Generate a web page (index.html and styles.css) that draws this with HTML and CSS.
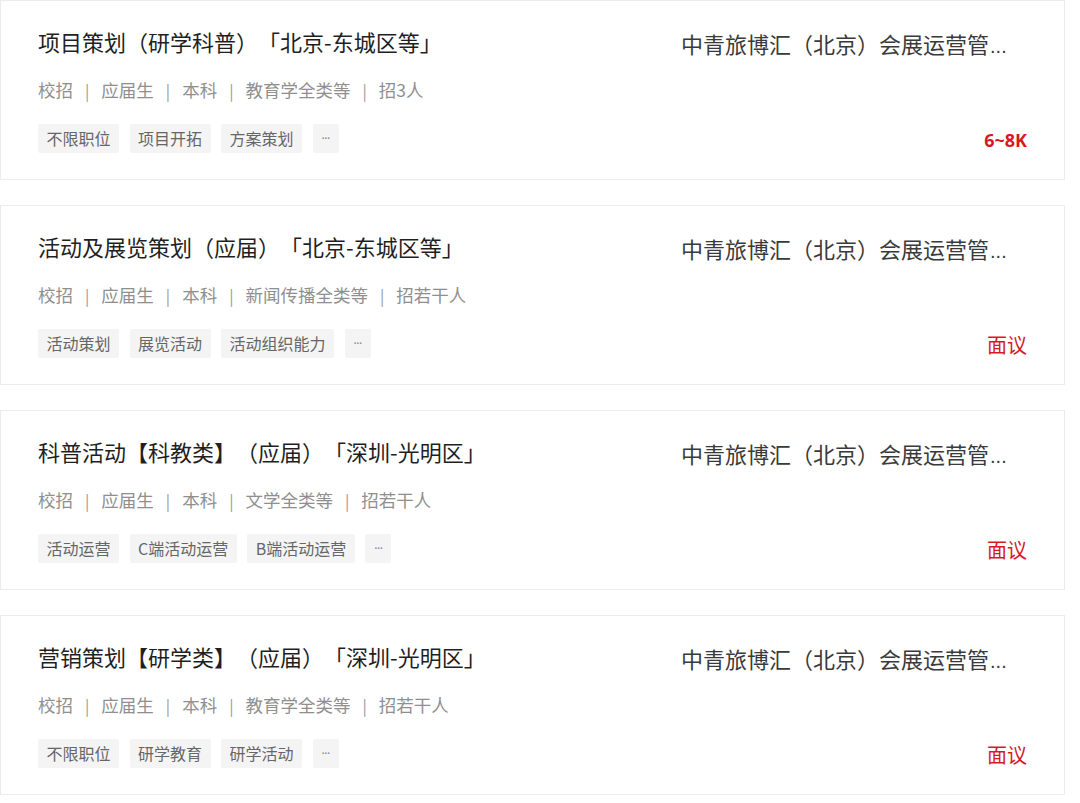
FILE: index.html
```html
<!DOCTYPE html>
<html lang="zh-CN">
<head>
<meta charset="utf-8">
<title>职位列表</title>
<link rel="stylesheet" href="styles.css">
</head>
<body>
<div class="list">
  <div class="card">
    <div class="main">
      <div class="title">项目策划（研学科普）「北京-东城区等」</div>
      <div class="meta"><span>校招</span><i class="sep">|</i><span>应届生</span><i class="sep">|</i><span>本科</span><i class="sep">|</i><span>教育学全类等</span><i class="sep">|</i><span>招3人</span></div>
      <div class="tags"><span class="tag">不限职位</span><span class="tag">项目开拓</span><span class="tag">方案策划</span><span class="tag more">···</span></div>
    </div>
    <div class="side">
      <div class="company">中青旅博汇（北京）会展运营管<span class="dots">...</span></div>
      <div class="salary bold">6~8K</div>
    </div>
  </div>
  <div class="card">
    <div class="main">
      <div class="title">活动及展览策划（应届）「北京-东城区等」</div>
      <div class="meta"><span>校招</span><i class="sep">|</i><span>应届生</span><i class="sep">|</i><span>本科</span><i class="sep">|</i><span>新闻传播全类等</span><i class="sep">|</i><span>招若干人</span></div>
      <div class="tags"><span class="tag">活动策划</span><span class="tag">展览活动</span><span class="tag">活动组织能力</span><span class="tag more">···</span></div>
    </div>
    <div class="side">
      <div class="company">中青旅博汇（北京）会展运营管<span class="dots">...</span></div>
      <div class="salary">面议</div>
    </div>
  </div>
  <div class="card">
    <div class="main">
      <div class="title">科普活动【科教类】（应届）「深圳-光明区」</div>
      <div class="meta"><span>校招</span><i class="sep">|</i><span>应届生</span><i class="sep">|</i><span>本科</span><i class="sep">|</i><span>文学全类等</span><i class="sep">|</i><span>招若干人</span></div>
      <div class="tags"><span class="tag">活动运营</span><span class="tag">C端活动运营</span><span class="tag">B端活动运营</span><span class="tag more">···</span></div>
    </div>
    <div class="side">
      <div class="company">中青旅博汇（北京）会展运营管<span class="dots">...</span></div>
      <div class="salary">面议</div>
    </div>
  </div>
  <div class="card">
    <div class="main">
      <div class="title">营销策划【研学类】（应届）「深圳-光明区」</div>
      <div class="meta"><span>校招</span><i class="sep">|</i><span>应届生</span><i class="sep">|</i><span>本科</span><i class="sep">|</i><span>教育学全类等</span><i class="sep">|</i><span>招若干人</span></div>
      <div class="tags"><span class="tag">不限职位</span><span class="tag">研学教育</span><span class="tag">研学活动</span><span class="tag more">···</span></div>
    </div>
    <div class="side">
      <div class="company">中青旅博汇（北京）会展运营管<span class="dots">...</span></div>
      <div class="salary">面议</div>
    </div>
  </div>
</div>
</body>
</html>
```
FILE: styles.css
```css
html, body {
  margin: 0;
  padding: 0;
  background: #ffffff;
}
body {
  font-family: "Noto Sans CJK SC", "Noto Sans", sans-serif;
  width: 1080px;
  text-spacing-trim: space-all;
}
.list {
  display: flex;
  flex-direction: column;
  gap: 25px;
  width: 1065px;
}
.card {
  box-sizing: border-box;
  height: 180px;
  border: 1px solid #ececec;
  display: flex;
  padding: 25px 37px 0 37px;
  background: #fff;
}
.main {
  flex: 1;
  min-width: 0;
}
.title {
  font-size: 22px;
  line-height: 30px;
  color: #1f1f1f;
  white-space: nowrap;
  text-spacing-trim: space-all;
}
.meta {
  margin-top: 22px;
  font-size: 17.5px;
  line-height: 24px;
  color: #8f8f8f;
  white-space: nowrap;
  display: flex;
  align-items: center;
}
.sep {
  font-style: normal;
  color: #9a9a9a;
  margin: 0 12px;
  font-size: 16px;
}
.tags {
  margin-top: 22px;
  display: flex;
  gap: 10.5px;
}
.tag {
  height: 29px;
  line-height: 29px;
  padding: 0 8.5px;
  background: #f4f4f4;
  color: #666;
  font-size: 16px;
  border-radius: 2px;
  white-space: nowrap;
}
.tag.more {
  font-family: "Noto Sans", sans-serif;
  padding: 0 9px;
  font-size: 12px;
  letter-spacing: -0.5px;
  color: #888;
}
.side {
  width: 346px;
  display: flex;
  flex-direction: column;
  padding-top: 2px;
}
.company {
  height: 30px;
  font-size: 22px;
  line-height: 30px;
  color: #3a3a3a;
  white-space: nowrap;
}
.dots {
  font-family: "Liberation Sans", sans-serif;
  font-size: 20px;
  line-height: 20px;
  margin-left: 1px;
}
.salary {
  margin-top: 68px;
  text-align: right;
  color: #d7191f;
  font-size: 20px;
  line-height: 28px;
}
.salary.bold {
  font-family: "Open Sans", "Noto Sans", sans-serif;
  font-weight: 700;
  font-size: 18px;
}
```
